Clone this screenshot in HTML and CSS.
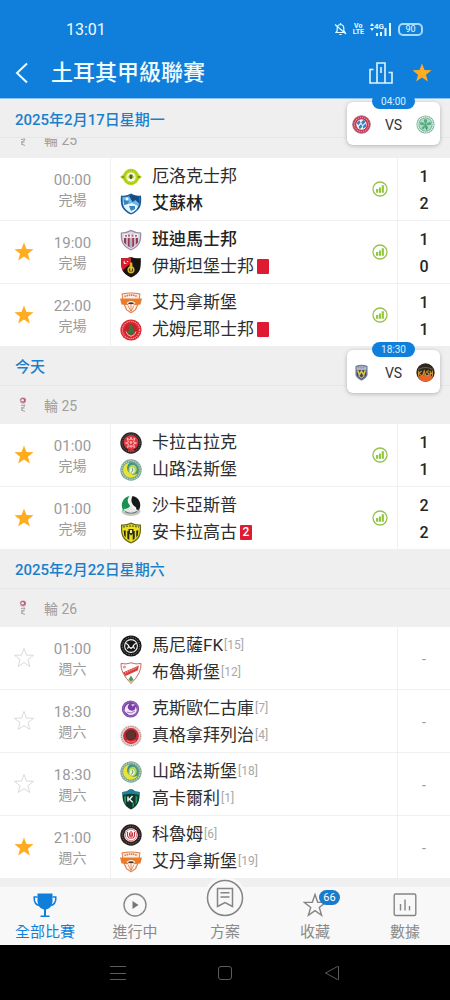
FILE: index.html
```html
<!DOCTYPE html>
<html lang="zh-Hant">
<head>
<meta charset="UTF-8">
<meta name="viewport" content="width=device-width, initial-scale=1">
<title>土耳其甲級聯賽</title>
<link rel="stylesheet" href="styles.css">
</head>
<body>
<svg class="sprite" aria-hidden="true">
    <symbol id="star" viewBox="0 0 24 24"><path d="M12 1.6l2.7 7.2 7.7.3-6.1 4.8 2.1 7.4-6.4-4.3-6.4 4.3 2.1-7.4-6.1-4.8 7.7-.3z"/></symbol>
    <symbol id="chart" viewBox="0 0 16 16">
        <circle cx="8" cy="8" r="7" fill="none" stroke="#93c34c" stroke-width="1.3"/>
        <path d="M4 8h2.200v3.700H4zM6.900 6.500H9v5.200H6.900zM9.700 4.300h2.200v7.400H9.700z" fill="#93c83e"/>
    </symbol>
    <symbol id="league" viewBox="0 0 12 18">
        <circle cx="6" cy="4.500" r="3.200" fill="#d9b3bf"/>
        <path d="M3.200 3.200Q6 .8 8.800 3.200L8.200 6Q6 7.600 4 6z" fill="#b0607a"/>
        <circle cx="5.600" cy="4.200" r="1.300" fill="#f5e9ee"/>
        <path d="M4 9.500l4-.5-1.600 2.600M4 12h3.600M4.400 14l3.600 1.500M5 11v4" stroke="#a79ea3" fill="none"/>
    </symbol>

    <!-- team badges -->
    <symbol id="erok" viewBox="0 0 22 22">
        <path d="M0 11l4-3h14l4 3-4 3H4z" fill="#b4cf1c"/>
        <circle cx="11" cy="11" r="8.200" fill="#bed71d"/>
        <circle cx="11" cy="11" r="6.600" fill="none" stroke="#8fae1a" stroke-width="1" stroke-dasharray="1 1"/>
        <circle cx="11" cy="11" r="4.600" fill="#fbfdf0"/>
        <path d="M7.500 9.600h7v2.800h-7z" fill="#d5e36c"/>
        <path d="M9.500 8.400h3v3.600L11 13.600 9.500 12z" fill="#4a6120"/>
        <circle cx="3" cy="11" r="1" fill="#668b18"/><circle cx="19" cy="11" r="1" fill="#668b18"/>
    </symbol>
    <symbol id="erzurum" viewBox="0 0 22 22">
        <path d="M1 2.500Q7 3.500 11 .6q4 2.900 10 1.900.8 7-1 11.500Q17.500 19 11 21.600 4.500 19 2 14 .2 9.500 1 2.500z" fill="#1d5c9b"/>
        <path d="M2.500 4Q7 4.500 11 2.200q4 2.300 8.500 1.800.3 6-1 9-2 4.500-7.500 7-5.500-2.500-7.500-7-1.300-3-1-9z" fill="#6db9e6"/>
        <path d="M9 3l2-1 8.500 2v7l-4-4-3 2z" fill="#164b86"/>
        <path d="M3 9l6 2 3-1 6 3-1.500 3.500Q14 19 11 20q-5-2.500-7-6z" fill="#e6f4fb"/>
        <path d="M4 7l5 1-1 3-4 1zM9 13h6v3l-4 2z" fill="#3a85c1"/>
        <circle cx="7" cy="6" r="1.400" fill="#fff"/>
    </symbol>
    <symbol id="bandirma" viewBox="0 0 22 22">
        <path d="M.8 3.500Q6 3.500 11 .8q5 2.700 10.200 2.700.5 7-1.600 11Q17 19 11 21.400 5 19 2.400 14.500.3 10.500.8 3.500z" fill="#9a8ca2"/>
        <path d="M2 4.500Q7 4.500 11 2.200q4 2.300 9 2.300.3 6-1.500 9.500-2.200 4-7.500 6.200-5.300-2.200-7.500-6.200Q1.700 10.500 2 4.500z" fill="#d9dbe5"/>
        <path d="M4 9h2.300v7L4 13.500zM7.700 9h2v9.200l-2-1.200zM12.200 9h2v8l-2 1.200zM15.700 9H18v4.500L15.700 16z" fill="#99384f"/>
        <path d="M4 5.500h14v2.800H4z" fill="#f7f4f7"/>
        <path d="M5 6h2v1.800H5zM8 5.500h2v2.300H8zM11.500 5.500h2v2.300h-2zM15 6h2v1.800h-2z" fill="#b36b80"/>
        <path d="M10 9h2v10h-2z" fill="#a9b6cb"/>
    </symbol>
    <symbol id="istanbul" viewBox="0 0 22 22">
        <path d="M1.300 2Q6 3 11 1q5 2 9.700 1 .5 8-1 12-2.200 5-8.700 7.500Q4.500 19 2.300 14 .8 10 1.300 2z" fill="#17140f"/>
        <path d="M1.300 2Q6 3 11 1v6l-8.500 7.500Q.7 11 1.300 2z" fill="#d41f2d"/>
        <path d="M5.200 4.400a1.800 1.800 0 1 0 1.700 2.600 1.400 1.400 0 1 1-1.700-2.600z" fill="#fff"/>
        <circle cx="7.600" cy="5.600" r=".7" fill="#fff"/>
        <path d="M10.200 6.500h2l.4 4q2.600 1.300 1.800 4.800-.8 2.200-3.400 2.200t-3.400-2.200q-.8-3.500 1.800-4.800z" fill="#d8b52b"/>
        <circle cx="11" cy="14" r="2" fill="#2c2711"/>
        <path d="M10.300 11h1.500v4.500h-1.500z" fill="#f4d84f"/>
    </symbol>
    <symbol id="adana" viewBox="0 0 22 22">
        <path d="M1.500 1.500Q11-.6 20.500 1.500l-.7 5H22l-1.500 6h-2L16 18l-5 3.500L6 18l-2.500-5.500h-2L0 6.500h2.200z" fill="#df8250"/>
        <path d="M2.600 2.500Q11 .5 19.400 2.500L18.700 6.500H3.300z" fill="#fdeee4"/>
        <path d="M4.500 4.600Q11 1.500 17.500 4.600" stroke="#e07838" stroke-width="1.700" stroke-dasharray="1.500 .7" fill="none"/>
        <path d="M1 7.300h20l-1.200 5H2.200z" fill="#ee7a23"/>
        <path d="M5 13h12l-2 4.200-4 3.100-4-3.100z" fill="#fff3eb"/>
        <path d="M6.500 11q4.500-4 9 0l-2 1.800h-5z" fill="#fff"/>
        <path d="M7.500 11.200q3.500-2 7 0-3.500 2-7 0z" fill="#49301f"/>
        <path d="M8 13.500l3 6 3-6M11 13v6" stroke="#df773d" stroke-width=".8" fill="none"/>
    </symbol>
    <symbol id="umraniye" viewBox="0 0 22 22">
        <circle cx="11" cy="11" r="10.600" fill="#dc2932"/>
        <circle cx="11" cy="11" r="8.600" fill="none" stroke="#f2a4a4" stroke-width="1.100" stroke-dasharray="1.200 .9"/>
        <circle cx="11" cy="11" r="6.600" fill="#c8202c"/>
        <path d="M11 4.500l2 3.500h-1l2 3h-1l2.300 3.600h-3.500V17h-1.600v-2.400H6.700L9 11H8l2-3H9z" fill="#2e7a3d"/>
        <path d="M6 12.500q1 4 5 4.800 4-.8 5-4.800" stroke="#f6d3cf" stroke-width=".9" fill="none"/>
    </symbol>
    <symbol id="karagumruk" viewBox="0 0 22 22">
        <circle cx="11" cy="11" r="10.700" fill="#2b2325"/>
        <circle cx="11" cy="11" r="8.900" fill="none" stroke="#87706f" stroke-width=".9" stroke-dasharray="1 1"/>
        <circle cx="11" cy="10.500" r="7.400" fill="#e2343d"/>
        <path d="M7 6l3 2 1-3 1 3 3-2-1.500 4 3 1-3 1 1 3.500-3-2-.5 2-.5-2-3 2 1-3.500-3-1 3-1z" fill="none" stroke="#fbc1bd" stroke-width=".9"/>
        <circle cx="11" cy="10.500" r="1.400" fill="#f7a9a7"/>
        <path d="M8 18.800h6" stroke="#d44" stroke-width="1.200"/>
    </symbol>
    <symbol id="sanliurfa" viewBox="0 0 22 22">
        <circle cx="11" cy="11" r="10.700" fill="#79a69b"/>
        <circle cx="11" cy="11" r="9.200" fill="none" stroke="#cbdca9" stroke-width="1.100" stroke-dasharray="1.300 1.200"/>
        <circle cx="11" cy="11" r="7.600" fill="#419381"/>
        <path d="M10 3.500a7.600 7.600 0 1 0 7.500 11A6 6 0 0 1 10 3.500z" fill="#e9e337"/>
        <path d="M9 8q2-3 5.500-2 3 2 2 6-1.500 3.500-5 3.500-3-1-3-4z" fill="#b5d45b"/>
        <path d="M10.500 8.500q3-1 4 1.500t-2 4.500q-3 0-2.600-3z" fill="#f3f5cf"/>
        <path d="M12 9l1 2-1.500 2.500" stroke="#32795c" stroke-width=".8" fill="none"/>
    </symbol>
    <symbol id="sakarya" viewBox="0 0 22 22">
        <ellipse cx="11" cy="16" rx="9.500" ry="5" fill="#bfc6c4"/>
        <circle cx="11" cy="10" r="9.200" fill="#f5f7f6"/>
        <path d="M9.500 1A9.200 9.200 0 0 0 4 16q6-1 6-5.500Q5.500 6 9.500 1z" fill="#16944f"/>
        <path d="M12.500.9A9.200 9.200 0 0 1 17.500 16.500q-1.500-1-1.300-4Q9 8 12.500.9z" fill="#161b1a"/>
        <path d="M3.500 14q5 0 8-4 1 6 7 4.500-3 5-7.500 4.800-5-.3-7.500-5.300z" fill="#e3e8e6"/>
        <path d="M5 16.500q6 3.500 12 0" stroke="#69756f" stroke-width="1.200" fill="none"/>
    </symbol>
    <symbol id="ankara" viewBox="0 0 22 22">
        <path d="M1 2.500Q6 3 11 .5q5 2.500 10 2 .4 8-1.300 12Q17.500 19 11 21.600 4.500 19 2.300 14.500.6 10.500 1 2.500z" fill="#67671b"/>
        <path d="M2.200 3.800Q7 3.800 11 2q4 1.800 8.800 1.800.3 6.500-1.200 10Q17 17.600 11 20.200 5 17.600 3.400 13.800 1.900 10.300 2.200 3.800z" fill="#eadf23"/>
        <path d="M3.700 8.500h2v7l-1.500-2zM7.300 9h2v9l-2-1.500zM12.700 9h2v7.500l-2 1.500zM16.300 8.500h2l-.5 5-1.500 2z" fill="#25260f"/>
        <path d="M3 5q8-2 16 0" stroke="#6c6c14" stroke-width="1.300" stroke-dasharray="2 1" fill="none"/>
        <path d="M8.500 7h5v4L11 13.500 8.500 11z" fill="#37370f"/><path d="M10 8h2v3h-2z" fill="#f8f09b"/>
    </symbol>
    <symbol id="manisa" viewBox="0 0 22 22">
        <circle cx="11" cy="11" r="10.600" fill="#171717"/>
        <circle cx="11" cy="11" r="8.700" fill="none" stroke="#8d8d8d" stroke-width=".9" stroke-dasharray="1.200 1.300"/>
        <circle cx="11" cy="11" r="6.400" fill="none" stroke="#f0f0f0" stroke-width="1.100"/>
        <path d="M5.500 8.500Q8 8.500 9.200 12l1.800 1.500 1.800-1.500q1.200-3.500 3.700-3.500M7.500 13.800l1.500-3.300M14.500 13.800L13 10.500" stroke="#fff" stroke-width="1.200" fill="none"/>
    </symbol>
    <symbol id="bolu" viewBox="0 0 22 22">
        <path d="M1 1.500q5 1.200 10-.7 5 1.900 10 .7.3 5-2 9.500-3 6-8 10.500Q6 17 3 11 .7 6.500 1 1.500z" fill="#fff" stroke="#c86b5d" stroke-width="1"/>
        <path d="M3 10.500L18.800 3.500l-.8 4.800L5.500 14z" fill="#da3d3d"/>
        <path d="M5 11l12-5.500" stroke="#f5b9b2" stroke-width="1" stroke-dasharray="1.300 .8"/>
        <circle cx="4.500" cy="5" r="1.600" fill="#e89a8e"/>
        <path d="M11 13.500l2.500 4-2.500 2.500-2.500-2.500z" fill="#539d4f"/>
    </symbol>
    <symbol id="kecioren" viewBox="0 0 22 22">
        <circle cx="10.500" cy="11" r="8.600" fill="#7a3fa5"/>
        <circle cx="10.500" cy="11" r="7.300" fill="none" stroke="#a47bc2" stroke-width=".8"/>
        <path d="M4.500 13q0-6 5-7.500-2.500 3-1.500 5 1.500 2.500 4.500 2.300 3-.6 3-4.300 2.500 3.500 0 6.500-3 3-7 1.500-1.500-.8-4-3.500z" fill="#f3eaf8"/>
        <path d="M11 6.500q3-1 4 .5l-2.500 1.500z" fill="#d8c0e6"/>
        <path d="M7 14q4 2.500 8-1" stroke="#8c58b0" stroke-width=".8" fill="none"/>
    </symbol>
    <symbol id="gencler" viewBox="0 0 22 22">
        <circle cx="11" cy="11" r="10.700" fill="#e3d2ce"/>
        <circle cx="11" cy="11" r="9.500" fill="none" stroke="#9f7773" stroke-width="1" stroke-dasharray="1.100 1.200"/>
        <circle cx="11" cy="11" r="7.900" fill="#cf2434"/>
        <circle cx="11" cy="10" r="5.300" fill="#4c2927"/>
        <path d="M8 6.500v7M10 5.500v9M12 5.500v9M14 6.500v7" stroke="#77443e" stroke-width=".8"/>
        <path d="M6.500 15.500q4.500 3 9 0" stroke="#f06a72" stroke-width="1.200" fill="none"/>
    </symbol>
    <symbol id="kocaeli" viewBox="0 0 22 22">
        <path d="M2.500 4Q7 4 9.500 1.500h3Q15 4 19.500 4q.5 7-1.500 11-2 4-7 6.500Q6 19 4 15 2 11 2.500 4z" fill="#12362d"/>
        <path d="M2.500 4Q7 4 9.500 1.500h3Q15 4 19.500 4v3.200q-8.500-3-17 0z" fill="#20819a"/>
        <path d="M4 8.500l2-1v9.500l-1.600-3zM15.500 7.500l2 1-.3 5.500-1.700 3zM12.500 14.500H14v4l-1.500 1z" fill="#189954"/>
        <path d="M8 8.500v5M12.500 8l-3 3.200 3.200 3" stroke="#eef9f5" stroke-width="1.500" fill="none"/>
    </symbol>
    <symbol id="corum" viewBox="0 0 22 22">
        <circle cx="11" cy="11" r="10.700" fill="#2c2022"/>
        <circle cx="11" cy="11" r="8.700" fill="none" stroke="#8c7477" stroke-width=".9" stroke-dasharray="1 1.200"/>
        <circle cx="11" cy="11" r="6.800" fill="#fff"/>
        <circle cx="11" cy="11" r="5.700" fill="none" stroke="#dd7078" stroke-width=".9"/>
        <path d="M7.500 8v4l2 2.500M14.500 8v4l-2 2.500M9.500 8.500v3.500h3V8.500M11 7v8" stroke="#d02c3c" stroke-width="1.100" fill="none"/>
    </symbol>
    <symbol id="bayern" viewBox="0 0 22 22">
        <circle cx="11" cy="11" r="10.500" fill="#cf3049"/>
        <circle cx="11" cy="11" r="10.100" fill="none" stroke="#8093bd" stroke-width=".8"/>
        <circle cx="11" cy="11" r="8.100" fill="none" stroke="#ef9da7" stroke-width="1.200" stroke-dasharray="1.400 1"/>
        <circle cx="11" cy="11" r="6" fill="#f4f8fc"/>
        <path d="M5.500 9l3-3 1.500 3-3 3zM10.500 8.500l3-3 2.500 2-3.500 4zM7.500 13.500l3-3 1.500 3-3 3zM12.500 13l3.500-3.500.5 3.500-3.500 3z" fill="#3583bf"/>
    </symbol>
    <symbol id="celtic" viewBox="0 0 22 22">
        <circle cx="11" cy="11" r="10.500" fill="#6eb393"/>
        <circle cx="11" cy="11" r="8.800" fill="none" stroke="#e5f2eb" stroke-width="1.600" stroke-dasharray="1.800 .5"/>
        <circle cx="11" cy="11" r="7.200" fill="#b4dcc8"/>
        <path d="M11 11Q7 5 11 4.500q4 .5 0 6.500 5-5 6.500-1.500 0 4-6.500 1.500 5 3.500 2 5.500-3 .8-2-5.500-1 6.500-4 5.500-2-2 4-5.500-6.500 2.500-6.500-1.500Q6.500 6 11 11z" fill="#58ad82"/>
        <path d="M11 11l1.500 6.500" stroke="#3e9069" stroke-width="1"/>
    </symbol>
    <symbol id="maccabi" viewBox="0 0 22 22">
        <path d="M4 3.500Q11 .5 18 3.500V14q-1.500 4-7 6.500Q5.500 18 4 14z" fill="#74809d"/>
        <path d="M5.500 4.800Q11 2.500 16.500 4.800v3H5.500z" fill="#b9c0cf"/>
        <path d="M5.500 8.500h11V14q-1.500 3-5.500 5-4-2-5.500-5z" fill="#394868"/>
        <path d="M6.500 8.500l2 5 2.500-4 2.500 4 2-5" stroke="#dfc146" stroke-width="1.900" fill="none"/>
        <path d="M7.500 14.500L11 17.500l3.500-3" stroke="#d2bd5b" stroke-width="1.200" fill="none"/>
        <path d="M7 5.500h8" stroke="#5b6682" stroke-dasharray="1 1"/>
    </symbol>
    <symbol id="kashi" viewBox="0 0 22 22">
        <circle cx="11" cy="11" r="10.600" fill="#30271c"/>
        <path d="M2 15.500Q11 12 20 15.500 17 21.600 11 21.600T2 15.500z" fill="#e8642a"/>
        <path d="M2.500 7.500Q11 3 19.500 7.500" stroke="#686149" stroke-width="1.200" fill="none"/>
        <path d="M3 9v6M3.500 12l3-3M3.500 12l3 3M7.500 15l2-6 2 6M8.500 13h2M15 9q-3 0-2.500 2 3 1 2.500 3-1 1.500-2.500.5M16.500 9v6M19 9v6M16.500 12H19" stroke="#d69c39" stroke-width="1.200" fill="none"/>
    </symbol>
</svg>

<div class="app">
    <header class="header">
        <div class="status">
            <span class="clock">13:01</span>
            <div class="status-icons">
                <svg width="13" height="14" viewBox="0 0 13 14" fill="none" stroke="#e4fbff" stroke-width="1.200"><path d="M2 10.500h9L9.800 8.700V6q0-3-3.300-3.500Q3.200 3 3.200 6v2.700zM5.300 12.500h2.400M6.500 1v1.500M1 2.500l11 9.500"/></svg>
                <span class="volte"><span>Vo</span><span>LTE</span></span>
                <span class="network">
                    <svg width="4" height="8" viewBox="0 0 4 8" fill="#e4fbff"><path d="M2 0l2 3H0zM2 8l2-3H0z"/></svg>
                    <span>4G</span>
                    <svg width="16" height="13" viewBox="0 0 16 13" fill="#e4fbff"><path d="M0 10h2v3H0zM4 9h2v4H4zM8.500 5h2v8h-2zM13 0h2v13h-2z"/></svg>
                </span>
                <span class="battery">90</span>
            </div>
        </div>
        <div class="title-bar">
            <button class="icon-btn back" aria-label="返回"><svg width="14" height="22" viewBox="0 0 14 22" fill="none" stroke="#e9fbff" stroke-width="2"><path d="M12 1.500L2 11l10 9.500"/></svg></button>
            <h1>土耳其甲級聯賽</h1>
            <button class="icon-btn" aria-label="排名"><svg width="24" height="22" viewBox="0 0 24 22" fill="none" stroke="#dff6ff" stroke-width="1.600"><path d="M8 21H1V7.500h3.500M8 21V1h8v20zM19.500 10.500H23V21h-7M12 5v6"/></svg></button>
            <button class="icon-btn" aria-label="收藏聯賽"><svg class="star on" width="22" height="22"><use href="#star"/></svg></button>
        </div>
    </header>

    <main class="matches">
        <section class="day">
            <h2 class="date">2025年2月17日星期一</h2>
            <div class="round under"><svg width="12" height="18"><use href="#league"/></svg>輪 25</div>
            <a class="tip" href="#"><span class="tip-time">04:00</span><svg width="19" height="19"><use href="#bayern"/></svg>VS<svg width="19" height="19"><use href="#celtic"/></svg></a>
            <ul>
                <li class="match">
                    <span></span>
                    <div class="time">00:00<small>完場</small></div>
                    <div class="teams">
                        <div class="team"><svg><use href="#erok"/></svg>厄洛克士邦</div>
                        <div class="team win"><svg><use href="#erzurum"/></svg>艾蘇林</div>
                    </div>
                    <button class="icon-btn" aria-label="數據"><svg width="16" height="16"><use href="#chart"/></svg></button>
                    <div class="score"><span>1</span><span>2</span></div>
                </li>
                <li class="match">
                    <button class="icon-btn" aria-label="收藏"><svg class="star on" width="22" height="22"><use href="#star"/></svg></button>
                    <div class="time">19:00<small>完場</small></div>
                    <div class="teams">
                        <div class="team win"><svg><use href="#bandirma"/></svg>班迪馬士邦</div>
                        <div class="team"><svg><use href="#istanbul"/></svg>伊斯坦堡士邦<span class="card"></span></div>
                    </div>
                    <button class="icon-btn" aria-label="數據"><svg width="16" height="16"><use href="#chart"/></svg></button>
                    <div class="score"><span>1</span><span>0</span></div>
                </li>
                <li class="match">
                    <button class="icon-btn" aria-label="收藏"><svg class="star on" width="22" height="22"><use href="#star"/></svg></button>
                    <div class="time">22:00<small>完場</small></div>
                    <div class="teams">
                        <div class="team"><svg><use href="#adana"/></svg>艾丹拿斯堡</div>
                        <div class="team"><svg><use href="#umraniye"/></svg>尤姆尼耶士邦<span class="card"></span></div>
                    </div>
                    <button class="icon-btn" aria-label="數據"><svg width="16" height="16"><use href="#chart"/></svg></button>
                    <div class="score"><span>1</span><span>1</span></div>
                </li>
            </ul>
        </section>

        <section class="day">
            <h2 class="date">今天</h2>
            <div class="round"><svg width="12" height="18"><use href="#league"/></svg>輪 25</div>
            <a class="tip" href="#"><span class="tip-time">18:30</span><svg width="19" height="19"><use href="#maccabi"/></svg>VS<svg width="19" height="19"><use href="#kashi"/></svg></a>
            <ul>
                <li class="match">
                    <button class="icon-btn" aria-label="收藏"><svg class="star on" width="22" height="22"><use href="#star"/></svg></button>
                    <div class="time">01:00<small>完場</small></div>
                    <div class="teams">
                        <div class="team"><svg><use href="#karagumruk"/></svg>卡拉古拉克</div>
                        <div class="team"><svg><use href="#sanliurfa"/></svg>山路法斯堡</div>
                    </div>
                    <button class="icon-btn" aria-label="數據"><svg width="16" height="16"><use href="#chart"/></svg></button>
                    <div class="score"><span>1</span><span>1</span></div>
                </li>
                <li class="match">
                    <button class="icon-btn" aria-label="收藏"><svg class="star on" width="22" height="22"><use href="#star"/></svg></button>
                    <div class="time">01:00<small>完場</small></div>
                    <div class="teams">
                        <div class="team"><svg><use href="#sakarya"/></svg>沙卡亞斯普</div>
                        <div class="team"><svg><use href="#ankara"/></svg>安卡拉高古<span class="card">2</span></div>
                    </div>
                    <button class="icon-btn" aria-label="數據"><svg width="16" height="16"><use href="#chart"/></svg></button>
                    <div class="score"><span>2</span><span>2</span></div>
                </li>
            </ul>
        </section>

        <section class="day">
            <h2 class="date">2025年2月22日星期六</h2>
            <div class="round"><svg width="12" height="18"><use href="#league"/></svg>輪 26</div>
            <ul>
                <li class="match">
                    <button class="icon-btn" aria-label="收藏"><svg class="star" width="22" height="22"><use href="#star"/></svg></button>
                    <div class="time">01:00<small>週六</small></div>
                    <div class="teams wide">
                        <div class="team"><svg><use href="#manisa"/></svg>馬尼薩FK<span class="rank">[15]</span></div>
                        <div class="team"><svg><use href="#bolu"/></svg>布魯斯堡<span class="rank">[12]</span></div>
                    </div>
                    <div class="score none">-</div>
                </li>
                <li class="match">
                    <button class="icon-btn" aria-label="收藏"><svg class="star" width="22" height="22"><use href="#star"/></svg></button>
                    <div class="time">18:30<small>週六</small></div>
                    <div class="teams wide">
                        <div class="team"><svg><use href="#kecioren"/></svg>克斯歐仁古庫<span class="rank">[7]</span></div>
                        <div class="team"><svg><use href="#gencler"/></svg>真格拿拜列治<span class="rank">[4]</span></div>
                    </div>
                    <div class="score none">-</div>
                </li>
                <li class="match">
                    <button class="icon-btn" aria-label="收藏"><svg class="star" width="22" height="22"><use href="#star"/></svg></button>
                    <div class="time">18:30<small>週六</small></div>
                    <div class="teams wide">
                        <div class="team"><svg><use href="#sanliurfa"/></svg>山路法斯堡<span class="rank">[18]</span></div>
                        <div class="team"><svg><use href="#kocaeli"/></svg>高卡爾利<span class="rank">[1]</span></div>
                    </div>
                    <div class="score none">-</div>
                </li>
                <li class="match">
                    <button class="icon-btn" aria-label="收藏"><svg class="star on" width="22" height="22"><use href="#star"/></svg></button>
                    <div class="time">21:00<small>週六</small></div>
                    <div class="teams wide">
                        <div class="team"><svg><use href="#corum"/></svg>科魯姆<span class="rank">[6]</span></div>
                        <div class="team"><svg><use href="#adana"/></svg>艾丹拿斯堡<span class="rank">[19]</span></div>
                    </div>
                    <div class="score none">-</div>
                </li>
            </ul>
        </section>
    </main>

    <nav class="tabs">
        <a class="active" href="#">
            <svg width="24" height="26" viewBox="0 0 24 26"><path d="M4.500 1.500h15v8q-.5 6.500-6.500 8v6h3.500V25h-9v-1.500H11v-6q-6-1.500-6.500-8z" fill="#107fdc"/><path d="M4.500 5H1.200q-.5 7.500 5.300 8.500M19.500 5h3.300q.5 7.500-5.300 8.500" fill="none" stroke="#107fdc" stroke-width="1.500"/></svg>
            全部比賽
        </a>
        <a href="#">
            <svg width="24" height="26" viewBox="0 0 24 26"><circle cx="12" cy="13" r="11" fill="none" stroke="#888" stroke-width="1.400"/><path d="M9.500 9l6 4-6 4z" fill="#777"/></svg>
            進行中
        </a>
        <a class="plan" href="#">
            <svg width="44" height="44" viewBox="0 0 44 44" fill="none" stroke="#858585" stroke-width="1.500"><circle cx="22" cy="22" r="21.500" fill="#f8f8f8" stroke="none"/><circle cx="22" cy="22" r="17.500"/><path d="M14.500 12.500h15v18l-7.500-4-7.500 4zM17.500 16.800h9M17.500 21h9"/></svg>
            方案
        </a>
        <a href="#">
            <span class="tab-icon">
                <svg width="24" height="26" viewBox="0 0 24 26" fill="none" stroke="#858585" stroke-width="1.400"><path d="M12 2.500l2.700 7.700 8.100.2-6.500 5 2.300 7.900-6.600-4.600-6.600 4.600 2.300-7.900-6.500-5 8.100-.2z"/></svg>
                <span class="badge">66</span>
            </span>
            收藏
        </a>
        <a href="#">
            <svg width="24" height="26" viewBox="0 0 24 26" fill="none" stroke="#858585" stroke-width="1.400"><rect x="1.200" y="2" width="21.600" height="21.500" rx="1.500"/><path d="M7.500 12v6.500M12 7.500v11M16.500 14v4.500"/></svg>
            數據
        </a>
    </nav>

    <div class="system">
        <button class="icon-btn" aria-label="選單"><svg width="16" height="16" viewBox="0 0 16 16"><path d="M0 1.500h16M0 8.500h16M0 14.500h16"/></svg></button>
        <button class="icon-btn" aria-label="主畫面"><svg width="16" height="16" viewBox="0 0 16 16"><rect x="1.500" y="1.500" width="13" height="13" rx="2.500"/></svg></button>
        <button class="icon-btn" aria-label="上一頁"><svg width="16" height="16" viewBox="0 0 16 16"><path d="M14.500 1.500v13h-1L1.500 8l12-6.500z"/></svg></button>
    </div>
</div>
</body>
</html>
```

FILE: styles.css
```css
* {
    box-sizing: border-box;
}
body {
    margin: 0;
    background: #000;
    color: #333;
    font-family: Roboto, "Noto Sans CJK TC", sans-serif;
}
h1, h2, ul {
    margin: 0;
    padding: 0;
}
ul {
    list-style: none;
}
a {
    color: inherit;
    text-decoration: none;
}
svg {
    display: block;
    flex-shrink: 0;
}
.sprite {
    position: absolute;
    width: 0;
    height: 0;
}
.icon-btn {
    display: flex;
    align-items: center;
    justify-content: center;
    padding: 0;
    border: none;
    background: none;
    cursor: pointer;
}
.app {
    display: flex;
    flex-direction: column;
    min-height: 100vh;
}

/* header */
.header {
    background: #107fdc;
    color: #edfbff;
}
.status {
    display: flex;
    align-items: center;
    justify-content: space-between;
    height: 48px;
    padding: 10px 27px 0 66px;
}
.clock {
    font-size: 16px;
}
.status-icons {
    display: flex;
    align-items: center;
    gap: 6px;
}
.volte {
    display: flex;
    flex-direction: column;
    align-items: center;
    font-size: 7px;
    font-weight: bold;
    line-height: 6px;
}
.network {
    display: flex;
    align-items: flex-start;
    font-size: 8px;
    font-weight: bold;
    line-height: 8px;
}
.network svg:last-child {
    margin-left: -8px;
}
.battery {
    width: 25px;
    border: 2px solid #a9d9f8;
    border-radius: 5px;
    font-size: 9px;
    line-height: 9px;
    text-align: center;
}
.title-bar {
    display: flex;
    align-items: center;
    gap: 18px;
    height: 50px;
    padding: 0 17px 0 15px;
}
.title-bar h1 {
    flex: 1;
    margin-left: 4px;
    font-size: 22px;
    font-weight: 500;
    line-height: 30px;
}

/* match list */
.matches {
    flex: 1;
    background: #efefef;
}
.day {
    position: relative;
}
.date {
    position: relative;
    z-index: 1;
    height: 40px;
    padding-left: 15px;
    border-bottom: 1px solid #e4e7e9;
    background: #efefef;
    color: #1c7fca;
    font-size: 15px;
    font-weight: 500;
    line-height: 42px;
}
.day:first-child .date {
    border-top: 1px solid #8cc4ef;
}
.round {
    display: flex;
    align-items: center;
    gap: 15px;
    height: 38px;
    padding-left: 17px;
    color: #a0a0a0;
    font-size: 14px;
}
/* first round row has scrolled under its date */
.round.under {
    margin-top: -18px;
}
.tip {
    position: absolute;
    z-index: 2;
    top: 4px;
    right: 10px;
    display: flex;
    align-items: center;
    justify-content: space-between;
    width: 93px;
    height: 43px;
    padding: 2px 5px 0;
    border-radius: 6px;
    background: #fff;
    box-shadow: 0 1px 4px rgba(0, 0, 0, 0.25);
    font-size: 14px;
}
.tip-time {
    position: absolute;
    top: -8px;
    left: 25px;
    width: 43px;
    border-radius: 8px;
    background: #107fdc;
    color: #d9f1ff;
    font-size: 10px;
    line-height: 15px;
    text-align: center;
}
.match {
    display: grid;
    grid-template-columns: 48px 62px 1fr 35px 53px;
    height: 63px;
    border-bottom: 1px solid #efefef;
    background: #fff;
}
.match:last-child {
    height: 62px;
    border-bottom: none;
}
.star {
    fill: none;
    stroke: #d6d6d6;
    stroke-width: 1px;
}
.star.on {
    fill: #ffad1f;
    stroke: none;
}
.time {
    display: flex;
    flex-direction: column;
    justify-content: center;
    padding: 2px 13px 0 0;
    color: #9a9a9a;
    font-size: 15px;
    line-height: 20px;
    text-align: center;
}
.time small {
    font-size: 14px;
}
.teams {
    display: flex;
    flex-direction: column;
    justify-content: center;
    padding: 2px 0 0 9px;
    border-left: 1px solid #f0f0f0;
}
.teams.wide {
    grid-column: span 2;
}
.team {
    display: flex;
    align-items: center;
    color: #2e2e2e;
    font-size: 17px;
    line-height: 27px;
    white-space: nowrap;
}
.team svg {
    width: 22px;
    height: 22px;
    margin-right: 10px;
}
.team.win {
    color: #222;
    font-weight: 500;
}
.card {
    width: 12px;
    height: 15px;
    margin-left: 3px;
    border-radius: 1px;
    background: #de1b33;
    color: #fff;
    font-size: 12px;
    font-weight: 500;
    line-height: 15px;
    text-align: center;
}
.rank {
    margin-left: 1px;
    color: #a8a8a8;
    font-size: 12px;
}
.score {
    display: flex;
    flex-direction: column;
    align-items: center;
    justify-content: center;
    padding-top: 2px;
    border-left: 1px solid #f0f0f0;
    color: #262626;
    font-size: 16px;
    font-weight: 500;
    line-height: 27px;
}
.score.none {
    color: #999;
    font-size: 14px;
    font-weight: normal;
}

/* bottom tabs */
.tabs {
    display: grid;
    grid-template-columns: repeat(5, 1fr);
    grid-template-rows: 100%;
    height: 67px;
    border-top: 9px solid #efefef;
    background: #f8f8f8;
    color: #8a8a8a;
    font-size: 15px;
    line-height: 22px;
}
.tabs a {
    display: flex;
    flex-direction: column;
    align-items: center;
    justify-content: flex-end;
    gap: 3px;
    padding-bottom: 2px;
}
.tabs .active {
    color: #107fdc;
}
.tabs .plan {
    gap: 1px;
}
.tab-icon {
    position: relative;
}
.badge {
    position: absolute;
    top: -2px;
    left: 16px;
    width: 21px;
    border-radius: 8px;
    background: #1a7bcc;
    color: #fff;
    font-size: 11px;
    line-height: 15px;
    text-align: center;
}

/* android navigation */
.system {
    display: flex;
    justify-content: space-between;
    height: 55px;
    padding: 0 110px;
    background: #000;
    fill: none;
    stroke: #5c5c5c;
    stroke-width: 1px;
}
```
